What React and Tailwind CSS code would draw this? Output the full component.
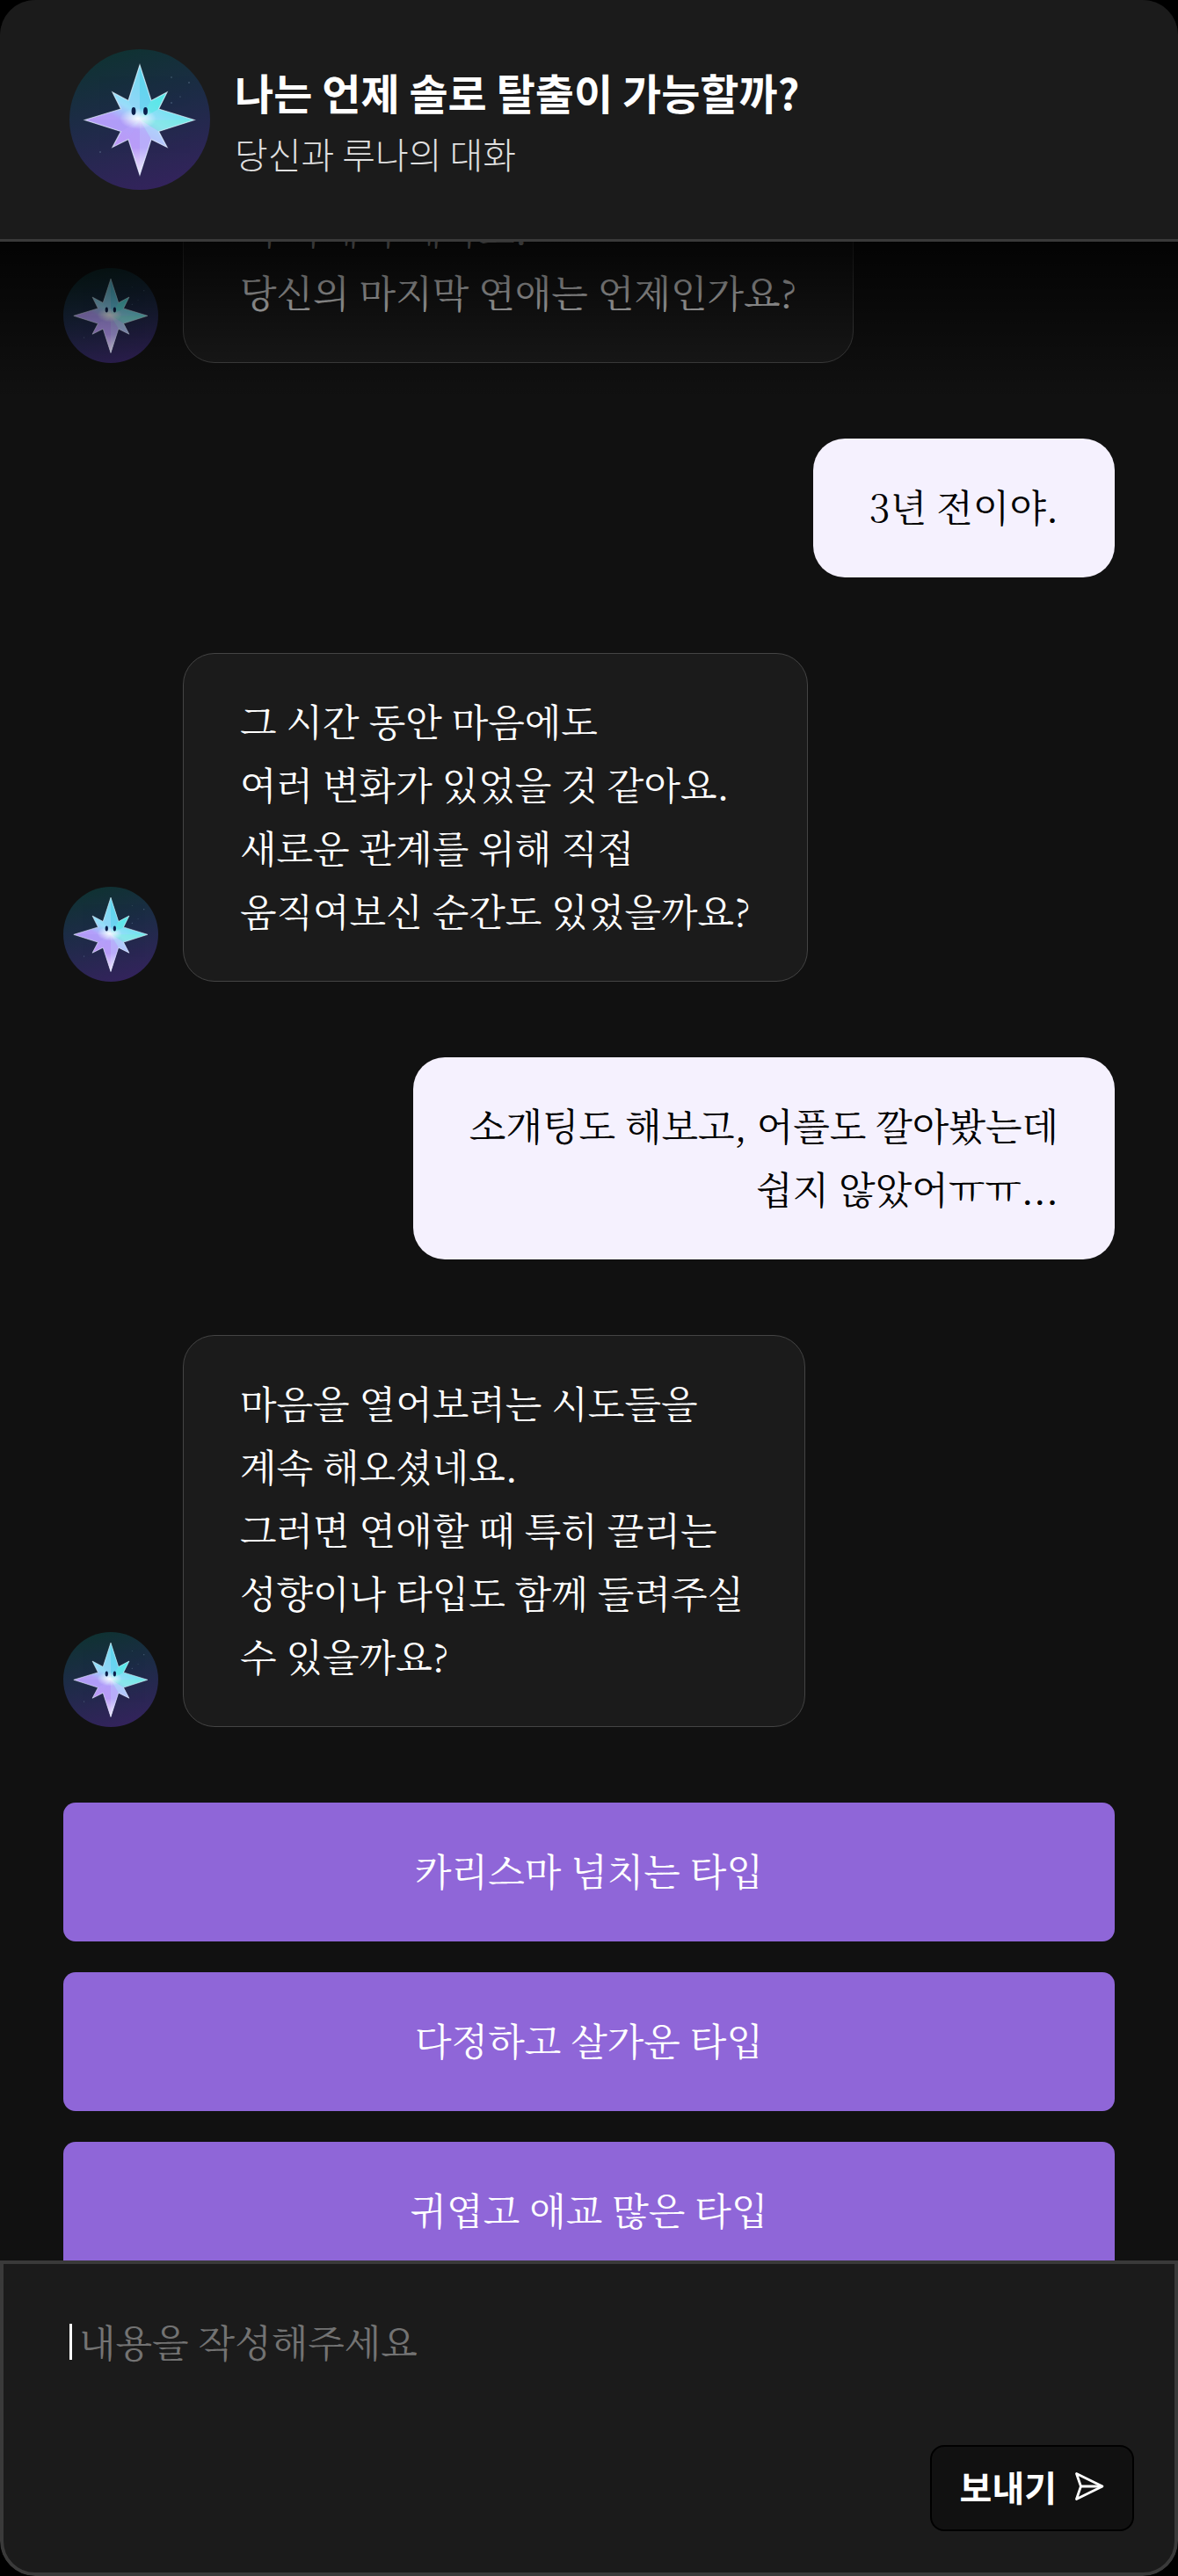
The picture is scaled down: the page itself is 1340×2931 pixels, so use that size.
import React, { useState } from "react";

const messages = [
  {
    sender: "bot",
    lines: ["더 자세히 해봐요.", "당신의 마지막 연애는 언제인가요?"],
  },
  { sender: "user", lines: ["3년 전이야."] },
  {
    sender: "bot",
    lines: [
      "그 시간 동안 마음에도",
      "여러 변화가 있었을 것 같아요.",
      "새로운 관계를 위해 직접",
      "움직여보신 순간도 있었을까요?",
    ],
  },
  {
    sender: "user",
    lines: ["소개팅도 해보고, 어플도 깔아봤는데", "쉽지 않았어ㅠㅠ..."],
  },
  {
    sender: "bot",
    width: "max-w-[708px]",
    lines: [
      "마음을 열어보려는 시도들을",
      "계속 해오셨네요.",
      "그러면 연애할 때 특히 끌리는",
      "성향이나 타입도 함께 들려주실 수 있을까요?",
    ],
  },
];

const options = [
  "카리스마 넘치는 타입",
  "다정하고 살가운 타입",
  "귀엽고 애교 많은 타입",
];

const STAR =
  "M80 18 93 58.5 111 49 101.5 68 142 80.5 101.5 93.5 111 111.5 93 102.5 80 143 67 102.5 49 111.5 58.5 93.5 17.5 80.5 58.5 68 49 49 67 58.5Z";

const Avatar = ({ id, className }) => (
  <svg
    viewBox="0 0 160 160"
    className={`shrink-0 rounded-full ${className}`}
    role="img"
    aria-label="루나"
  >
    <defs>
      <linearGradient id={`${id}-bg`} x1="0.35" y1="0" x2="0.6" y2="1">
        <stop offset="0" stopColor="#0f3232" />
        <stop offset="0.45" stopColor="#1d2b47" />
        <stop offset="1" stopColor="#33235c" />
      </linearGradient>
      <linearGradient id={`${id}-body`} x1="0.7" y1="0.2" x2="0.35" y2="0.8">
        <stop offset="0.1" stopColor="#62e6ec" />
        <stop offset="0.45" stopColor="#9adcfa" />
        <stop offset="0.65" stopColor="#b3a0fa" />
        <stop offset="1" stopColor="#bd98f5" />
      </linearGradient>
      <radialGradient id={`${id}-glow`}>
        <stop offset="0" stopColor="#fff" stopOpacity="0.9" />
        <stop offset="1" stopColor="#fff" stopOpacity="0" />
      </radialGradient>
      <linearGradient id={`${id}-tip`} x1="0" y1="0" x2="0" y2="1">
        <stop offset="0.75" stopColor="#fff" stopOpacity="0" />
        <stop offset="1" stopColor="#fff" stopOpacity="0.8" />
      </linearGradient>
    </defs>
    <rect width="160" height="160" fill={`url(#${id}-bg)`} />
    <g fill="#9fc0d8" opacity="0.45">
      <circle cx="136" cy="38" r="0.8" />
      <circle cx="116" cy="32" r="0.7" />
      <circle cx="116" cy="61" r="0.8" />
      <circle cx="126" cy="54" r="0.6" />
      <circle cx="35" cy="117" r="0.8" />
    </g>
    <path d={STAR} fill={`url(#${id}-body)`} />
    {/* facets */}
    <path d="M80 18V80L67 58.5Z" fill="#8fd0f6" opacity="0.6" />
    <path d="M80 18V80L93 58.5Z" fill="#62cdf0" opacity="0.7" />
    <path d="M93 58.5 111 49 101.5 68 80 80Z" fill="#52e8e4" opacity="0.6" />
    <path d="M142 80.5 101.5 93.5 80 80.5Z" fill="#7af0dc" opacity="0.5" />
    <path d="M17.5 80.5 58.5 93.5 80 80.5Z" fill="#a99af6" opacity="0.5" />
    <path d="M80 143V80L67 102.5Z" fill="#b79cf8" opacity="0.5" />
    <path d="M80 143V80L93 102.5Z" fill="#b9b4fa" opacity="0.7" />
    <path d="M80 80 101.5 93.5 111 111.5 93 102.5Z" fill="#b5d4fb" opacity="0.7" />
    <path d={STAR} fill={`url(#${id}-tip)`} />
    <ellipse cx="78" cy="79" rx="21" ry="12" fill={`url(#${id}-glow)`} />
    <path d={STAR} fill="none" stroke="#e6f4ff" strokeOpacity="0.7" strokeWidth="1.2" />
    <ellipse cx="73" cy="70.5" rx="2.4" ry="4.4" fill="#0b1f4b" />
    <ellipse cx="86.5" cy="70.5" rx="2.4" ry="4.4" fill="#0b1f4b" />
  </svg>
);

const SendIcon = () => (
  <svg
    viewBox="0 0 34 34"
    className="size-[34px]"
    fill="none"
    stroke="currentColor"
    strokeWidth="2.8"
    strokeLinecap="round"
    strokeLinejoin="round"
    aria-hidden="true"
  >
    <path d="M2.5 2.5 32 17 2.5 31.5 7.5 17Z" />
    <path d="M7.5 17H31" />
  </svg>
);

const BotMessage = ({ id, lines, width }) => (
  <div className="flex items-end gap-7">
    <Avatar id={id} className="size-[108px]" />
    <div
      className={`rounded-[36px] border border-[#444] bg-[#1b1b1b] px-16 pt-10 pb-11 text-white ${
        width || ""
      }`}
    >
      {lines.map((line) => (
        <p key={line}>{line}</p>
      ))}
    </div>
  </div>
);

const UserMessage = ({ lines }) => (
  <div className="self-end rounded-[36px] bg-[#f5f1fe] px-16 pt-[41px] pb-[45px] text-right text-black">
    {lines.map((line) => (
      <p key={line}>{line}</p>
    ))}
  </div>
);

const App = () => {
  const [userInput, setUserInput] = useState("");

  return (
    <div className="h-screen bg-black">
      <div className='flex h-full flex-col overflow-hidden rounded-[40px] bg-[#111] font-["Noto_Serif_CJK_KR","Noto_Sans_CJK_KR",serif] text-[43px] leading-[72px] break-keep'>
        <header className='flex shrink-0 items-center gap-7 border-b-[3px] border-[#3a3a3a] bg-[#1b1b1b] px-[79px] py-14 font-["Noto_Sans_CJK_KR",sans-serif]'>
          <Avatar id="header" className="size-40" />
          <div className="pt-1">
            <h1 className="text-[48px] leading-[72px] font-bold text-white">
              나는 언제 솔로 탈출이 가능할까?
            </h1>
            <p className="text-[41px] leading-[68px] font-light text-[#e0e0e0]">
              당신과 루나의 대화
            </p>
          </div>
        </header>

        <main className="relative min-h-0 flex-1 overflow-hidden px-[72px]">
          {/* scrolled part way past the first message */}
          <div className="-mt-[92px] flex flex-col gap-[86px]">
            {messages.map((msg, index) =>
              msg.sender === "user" ? (
                <UserMessage key={index} lines={msg.lines} />
              ) : (
                <BotMessage
                  key={index}
                  id={`msg-${index}`}
                  lines={msg.lines}
                  width={msg.width}
                />
              )
            )}
            <div className="flex flex-col gap-[35px]">
              {options.map((option) => (
                <button
                  key={option}
                  type="button"
                  onClick={() => setUserInput(option)}
                  className="w-full rounded-[14px] bg-[#8f66d8] pt-[41px] pb-[45px] text-white hover:bg-[#7f57c8]"
                >
                  {option}
                </button>
              ))}
            </div>
          </div>
          <div className="pointer-events-none absolute inset-x-0 top-0 h-[180px] bg-linear-to-b from-black/80 to-transparent" />
        </main>

        <form
          onSubmit={(e) => e.preventDefault()}
          className="flex shrink-0 flex-col rounded-b-[40px] border-4 border-[#3a3a3a] bg-[#1b1b1b] pt-[52px] pr-[46px] pb-[47px] pl-[75px]"
        >
          <div className="flex items-start gap-2">
            <span className="mt-4 h-[41px] w-[3px] bg-white" />
            <textarea
              rows={2}
              value={userInput}
              onChange={(e) => setUserInput(e.target.value)}
              placeholder="내용을 작성해주세요"
              aria-label="메시지"
              className="h-[154px] flex-1 resize-none bg-transparent text-white placeholder:text-[#737373] focus:outline-none"
            />
          </div>
          <button
            type="submit"
            className='flex items-center gap-5 self-end rounded-2xl border-2 border-black bg-[#111] px-8 pt-4 pb-5 font-["Noto_Sans_CJK_KR",sans-serif] text-[40px] leading-[58px] font-bold text-white'
          >
            보내기
            <SendIcon />
          </button>
        </form>
      </div>
    </div>
  );
};

export default App;
